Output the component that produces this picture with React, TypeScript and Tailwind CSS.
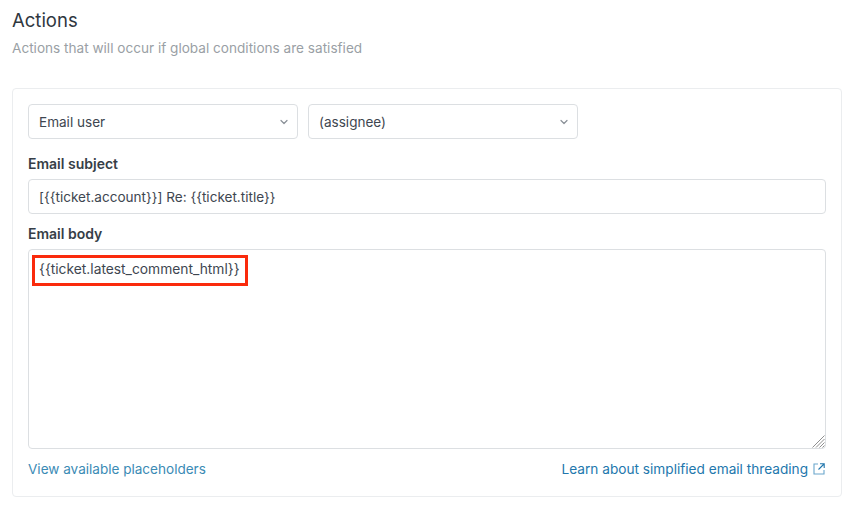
import React from "react";

function Chevron() {
  return (
    <svg width="10" height="10" viewBox="0 0 10 10" fill="none" stroke="#8a9097" strokeWidth="1.2" strokeLinecap="round" strokeLinejoin="round">
      <path d="M2 3.5 5 6.5 8 3.5" />
    </svg>
  );
}

function Select({ label }: { label: string }) {
  return (
    <div className="flex h-[35px] w-[270px] items-center justify-between rounded-[4px] border border-[#dcdfe2] bg-white pl-[10px] pr-[8px] text-[13.55px] text-[#3e4650]">
      <span className="pt-[1px]">{label}</span>
      <Chevron />
    </div>
  );
}

export default function App() {
  return (
    <div className="h-[507px] w-[856px] overflow-hidden bg-white px-[12px] pt-[8px] font-['Inter',sans-serif]">
      <h2 className="text-[18.5px] leading-[24px] text-[#2f3740]">Actions</h2>
      <p className="mt-[6px] text-[13.6px] leading-[20px] text-[#9a9fa5]">Actions that will occur if global conditions are satisfied</p>
      <div className="mt-[30px] h-[409px] w-[830px] rounded-[4px] border border-[#ebedef] px-[15px] pt-[15px]">
        <div className="flex gap-[10px]">
          <Select label="Email user" />
          <Select label="(assignee)" />
        </div>
        <div className="mt-[15px] text-[14px] font-semibold leading-[20px] text-[#363e47]">Email subject</div>
        <input
          readOnly
          value="[{{ticket.account}}] Re: {{ticket.title}}"
          className="mt-[5px] block h-[35px] w-full rounded-[4px] border border-[#dcdfe2] bg-white px-[10px] text-[13.55px] text-[#3e4650] outline-none"
        />
        <div className="mt-[10px] text-[14px] font-semibold leading-[20px] text-[#363e47]">Email body</div>
        <div className="relative mt-[5px] h-[200px]">
          <textarea
            readOnly
            defaultValue="{{ticket.latest_comment_html}}"
            className="block h-[200px] w-full resize-none rounded-[4px] border border-[#dcdfe2] bg-white px-[10px] py-[9px] text-[13.8px] leading-[20px] text-[#3e4650] outline-none"
          />
          <div className="pointer-events-none absolute left-[4px] top-[6px] h-[31px] w-[216px] border-[3px] border-[#fa2a0c]" />
          <svg className="pointer-events-none absolute bottom-[1px] right-[1px]" width="13" height="13" viewBox="0 0 13 13" fill="none" stroke="#8f8f8f" strokeWidth="1">
            <path d="M0.5 12.5 12.5 0.5M4 12.5 12.5 4M7.5 12.5 12.5 7.5M10.5 12.5 12.5 10.5" />
          </svg>
        </div>
        <div className="mt-[10px] flex items-center justify-between leading-[20px]">
          <span className="text-[13.55px] text-[#3b8bb5]">View available placeholders</span>
          <span className="flex items-center gap-[5px] pr-[1px] text-[13.65px] text-[#2277ad]">
            Learn about simplified email threading
            <svg width="12" height="12" viewBox="0 0 12 12" fill="none" strokeWidth="1.1">
              <path d="M5 1H1v10h10V7" stroke="#6aa6cc" />
              <path d="M7 .8h4.2V5M11 1 5.5 6.5" stroke="#2277ad" />
            </svg>
          </span>
        </div>
      </div>
    </div>
  );
}
